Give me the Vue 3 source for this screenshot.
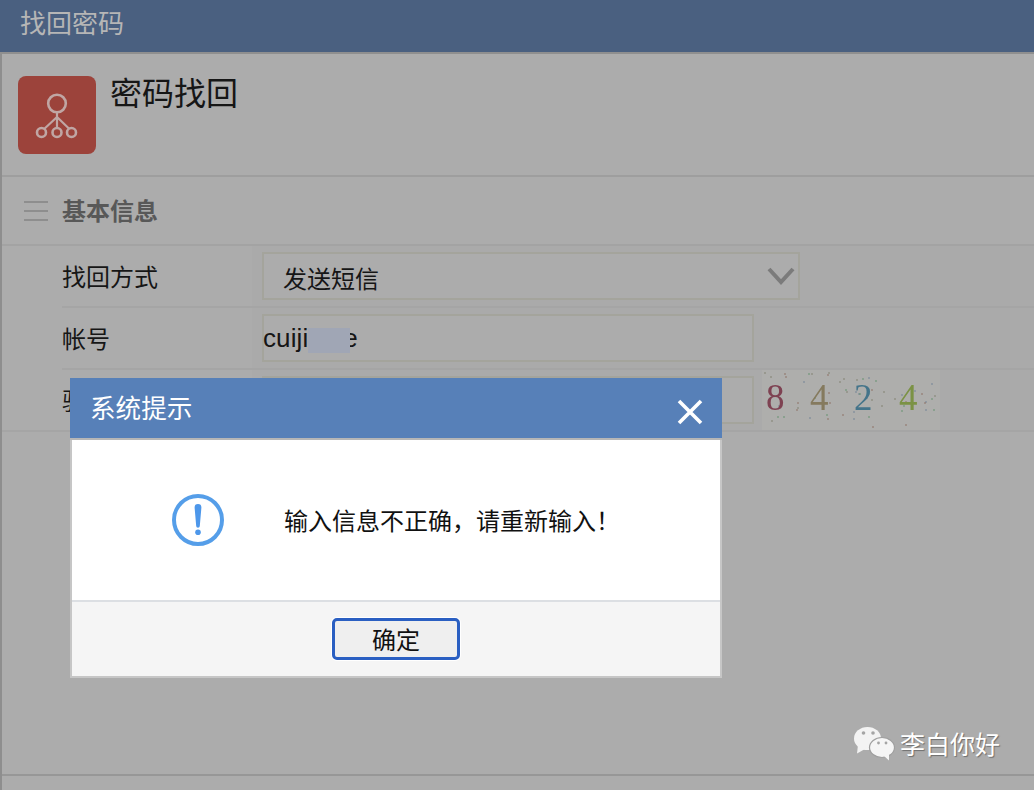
<script setup>
const rows = [
  { label: '找回方式', kind: 'select' },
  { label: '帐号', kind: 'account' },
  { label: '验证码', kind: 'captcha' }
]

const digits = [
  { v: '8', x: 4, y: 39.500, fill: '#7e4252' },
  { v: '4', x: 48, y: 40, fill: '#857a5e' },
  { v: '2', x: 92, y: 40, fill: '#44748a' },
  { v: '4', x: 137, y: 39.500, fill: '#7b9245' }
]

const noiseColors = ['#7d7d6c', '#8b6b5f', '#5f8f6a', '#6f7f95']
let seed = 23
const rnd = () => {
  seed = (seed * 16807) % 2147483647
  return seed / 2147483647
}
const noise = Array.from({ length: 58 }, (_, i) => ({
  id: i,
  x: Math.round(rnd() * 172) + 3,
  y: Math.round(rnd() * 56) + 2,
  fill: noiseColors[i % 4]
}))
</script>

<template>
  <div class="page">
    <header class="topbar">找回密码</header>

    <main class="sheet">
      <section class="intro">
        <div class="logo">
          <svg width="78" height="78" viewBox="0 0 78 78" fill="none" stroke="#c0a6a4" stroke-width="2.600">
            <circle cx="39" cy="27.500" r="8.800" />
            <path d="M39 36V55M39 41 24 55M39 41 53.500 55" stroke-width="2.200" />
            <circle cx="23.500" cy="56.500" r="4.500" fill="#9c433b" />
            <circle cx="39" cy="56.500" r="4.500" fill="#9c433b" />
            <circle cx="53.500" cy="56.500" r="4.500" fill="#9c433b" />
          </svg>
        </div>
        <h1 class="heading">密码找回</h1>
      </section>

      <section class="group-title">
        <span class="burger"><i></i><i></i><i></i></span>
        <h2>基本信息</h2>
      </section>

      <section class="form">
        <div v-for="row in rows" :key="row.label" class="row">
          <div class="label">{{ row.label }}</div>
          <div class="value">
            <div v-if="row.kind === 'select'" class="field select">
              <span>发送短信</span>
              <svg class="chevron" width="28" height="18" viewBox="0 0 28 18" fill="none" stroke="#7b7b7b" stroke-width="4">
                <path d="M2 2 14 15 26 2" />
              </svg>
            </div>
            <div v-else-if="row.kind === 'account'" class="field account">
              <span>cuiji</span><span class="mask"></span><span>e</span>
            </div>
            <template v-else>
              <div class="field"></div>
              <svg class="captcha" width="178" height="60" viewBox="0 0 178 60">
                <rect width="178" height="60" fill="#aeaeac" />
                <circle v-for="d in noise" :key="d.id" :cx="d.x" :cy="d.y" r="0.8" :fill="d.fill" />
                <text
                  v-for="d in digits"
                  :key="d.x"
                  :x="d.x"
                  :y="d.y"
                  :fill="d.fill"
                  font-family="'Liberation Serif', serif"
                  font-size="37"
                >{{ d.v }}</text>
              </svg>
            </template>
          </div>
        </div>
      </section>

      <div class="sheet-foot"></div>
    </main>

    <div class="dialog" role="dialog">
      <div class="dialog-head">
        <span>系统提示</span>
        <svg width="28" height="28" viewBox="0 0 28 28" stroke="#fff" stroke-width="3.600" fill="none">
          <path d="M3 3 25 25M25 3 3 25" />
        </svg>
      </div>
      <div class="dialog-body">
        <svg class="alert" width="52" height="52" viewBox="0 0 52 52">
          <circle cx="26" cy="26" r="24" fill="none" stroke="#559ee9" stroke-width="4" />
          <path d="M22.600 13.500a3.400 3.400 0 0 1 6.800 0L27.800 32a1.800 1.800 0 0 1-3.600 0Z" fill="#4d97ea" />
          <circle cx="26" cy="38.300" r="2.800" fill="#4d97ea" />
        </svg>
        <p>输入信息不正确，请重新输入！</p>
      </div>
      <div class="dialog-foot">
        <button type="button">确定</button>
      </div>
    </div>

    <div class="watermark">
      <svg width="42" height="36" viewBox="0 0 42 36">
        <ellipse cx="14.500" cy="12.500" rx="13.500" ry="11.500" fill="#f3f3f3" />
        <path d="M5 19 4 27.500 12 23Z" fill="#f3f3f3" />
        <ellipse cx="29" cy="21.500" rx="12.500" ry="10" fill="#f5f5f5" stroke="#9f9f9f" stroke-width="1.200" />
        <path d="M31 30 36 34.500 36 28Z" fill="#f5f5f5" />
        <circle cx="10.500" cy="7" r="1.800" fill="#a5a5a5" />
        <circle cx="20" cy="7" r="1.800" fill="#a5a5a5" />
        <circle cx="25.500" cy="17" r="1.400" fill="#a5a5a5" />
        <circle cx="33" cy="17" r="1.400" fill="#a5a5a5" />
      </svg>
      <span>李白你好</span>
    </div>
  </div>
</template>

<style>
html,
body {
  margin: 0;
  background: #acacac;
}
</style>

<style scoped>
.page {
  position: relative;
  width: 1034px;
  height: 790px;
  overflow: hidden;
  background: #acacac;
  font-family: "Liberation Sans", "Noto Sans CJK SC", sans-serif;
  color: #161616;
}

.topbar {
  box-sizing: border-box;
  height: 54px;
  padding: 0 0 9px 20px;
  display: flex;
  align-items: center;
  background: #4a6080;
  border-bottom: 2px solid #8f8f8f;
  color: #b6b6b6;
  font-size: 26px;
}

.sheet {
  box-sizing: border-box;
  height: 736px;
  display: flex;
  flex-direction: column;
  border-left: 2px solid #8e8e8e;
}

.intro {
  box-sizing: border-box;
  height: 123px;
  padding: 22px 0 0 16px;
  display: flex;
  gap: 14px;
  border-bottom: 2px solid #9e9e9e;
}

.logo {
  width: 78px;
  height: 78px;
  border-radius: 8px;
  background: #9c433b;
}

.heading {
  margin: -4px 0 0;
  font-size: 32px;
  line-height: 44px;
  font-weight: 400;
}

.group-title {
  box-sizing: border-box;
  height: 69px;
  padding-left: 22px;
  display: flex;
  align-items: center;
  gap: 14px;
  border-bottom: 2px solid #a3a3a3;
}

.group-title h2 {
  margin: 0 0 2px;
  font-size: 24px;
  font-weight: 700;
  color: #585858;
}

.burger {
  width: 24px;
  display: flex;
  flex-direction: column;
  gap: 7px;
}

.burger i {
  height: 2px;
  background: #8e8e8e;
}

.form {
  padding-left: 60px;
}

.row {
  box-sizing: border-box;
  height: 62px;
  display: flex;
  border-bottom: 2px solid #a5a5a5;
}

.row:last-child {
  margin-left: -60px;
  padding-left: 60px;
}

.label {
  width: 190px;
  padding-top: 14px;
  font-size: 24px;
  line-height: 36px;
}

.value {
  flex: 1;
  display: flex;
  align-items: center;
  padding-left: 10px;
  gap: 8px;
  background: #aaaaaa;
}

.field {
  box-sizing: border-box;
  width: 492px;
  height: 48px;
  border: 2px solid #a4a49c;
  background: #acacac;
  font-size: 24px;
}

.select {
  width: 538px;
  padding: 2px 3px 0 19px;
  display: flex;
  align-items: center;
  justify-content: space-between;
}

.chevron {
  flex: none;
  margin-top: -2px;
}

.account {
  display: flex;
  align-items: center;
  font-size: 26px;
  line-height: 44px;
  white-space: nowrap;
  letter-spacing: 0.100px;
  text-indent: -1px;
}

.mask {
  position: relative;
  width: 42px;
  height: 25px;
  margin: 4px -6px 0 0;
  background: #a0a6b5;
  filter: blur(0.6px);
}

.captcha {
  flex: none;
  filter: blur(0.5px);
}

.sheet-foot {
  margin-top: auto;
  height: 14px;
  border-top: 2px solid #979797;
}

.dialog {
  position: absolute;
  left: 70px;
  top: 378px;
  width: 652px;
  height: 300px;
  box-sizing: border-box;
  display: flex;
  flex-direction: column;
  background: #f5f5f5;
  border: 2px solid #c6c6c6;
  border-top: 0;
}

.dialog-head {
  box-sizing: border-box;
  height: 62px;
  margin: 0 -2px;
  padding: 0 18px 2px 20px;
  display: flex;
  align-items: center;
  justify-content: space-between;
  background: #5780b8;
  border-bottom: 2px solid #b6b6b6;
  color: #fff;
  font-size: 25.600px;
}

.dialog-head span {
  margin-top: -2px;
}

.dialog-head svg {
  margin-top: 10px;
}

.dialog-body {
  height: 160px;
  padding-left: 100px;
  display: flex;
  align-items: center;
  gap: 60px;
  background: #fff;
  border-bottom: 2px solid #dcdfe3;
}

.dialog-body .alert {
  flex: none;
}

.dialog-body p {
  margin: 0 0 2px;
  font-size: 24px;
  color: #111;
}

.dialog-foot {
  flex: 1;
  display: flex;
  justify-content: center;
  padding-top: 16px;
}

.dialog-foot button {
  box-sizing: border-box;
  width: 128px;
  height: 42px;
  padding: 0 0 3px;
  border: 3px solid #2a5fc2;
  border-radius: 5px;
  background: #efefef;
  box-shadow: 0 0 0 1px #fff;
  color: #111;
  font-family: inherit;
  font-size: 24px;
}

.watermark {
  position: absolute;
  left: 853px;
  top: 726px;
  display: flex;
  align-items: center;
  gap: 5px;
  color: #fff;
  font-size: 25px;
  text-shadow: 1px 1px 1px #6e6e6e;
}

.watermark span {
  margin-top: -2px;
}
</style>
